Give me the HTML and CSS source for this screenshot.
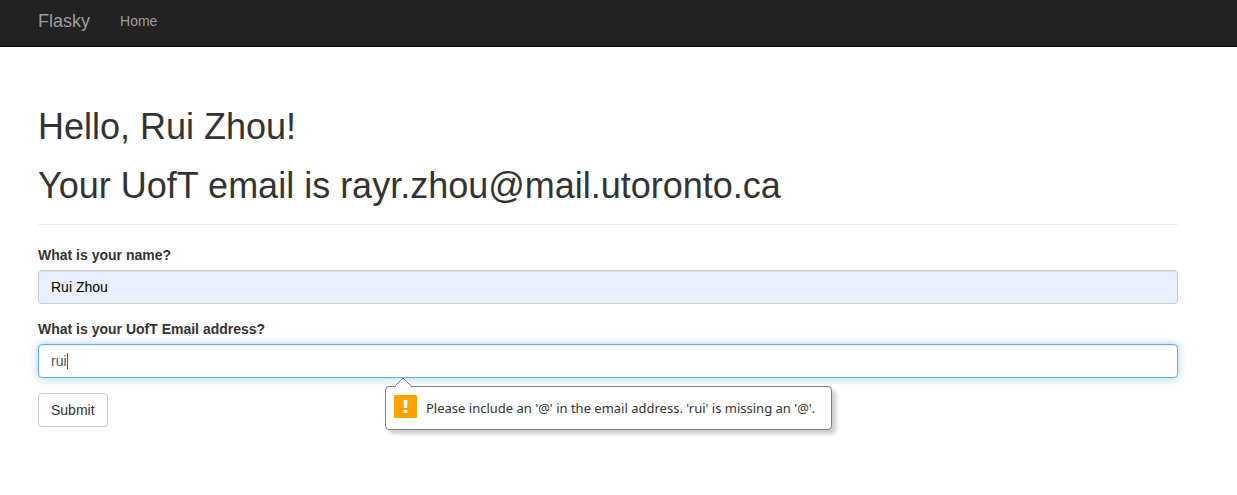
FILE: index.html
```html
<!DOCTYPE html>
<html lang="en">
<head>
<meta charset="utf-8">
<meta name="viewport" content="width=device-width, initial-scale=1">
<title>Flasky</title>
<link rel="stylesheet" href="styles.css">
</head>
<body>
<nav class="navbar">
  <div class="container navbar-inner">
    <a class="navbar-brand" href="#">Flasky</a>
    <a class="navbar-link" href="#">Home</a>
  </div>
</nav>
<main class="page">
  <div class="container">
    <header class="page-header">
      <h1>Hello, Rui Zhou!</h1>
      <h1>Your UofT email is rayr.zhou@mail.utoronto.ca</h1>
    </header>
    <form class="form" novalidate>
      <div class="form-group">
        <label for="name">What is your name?</label>
        <input class="form-control autofilled" id="name" type="text" value="Rui Zhou">
      </div>
      <div class="form-group">
        <label for="email">What is your UofT Email address?</label>
        <div class="field">
          <input class="form-control active" id="email" type="email" value="rui" aria-describedby="email-error">
          <span class="caret"></span>
          <div class="bubble" id="email-error" role="alert">
            <svg class="bubble-arrow" width="18" height="10" viewBox="0 0 18 10" aria-hidden="true">
              <path d="M1 10 9 1.500 17 10Z" fill="#fff"/>
              <path d="M0.500 9.500 9 1 17.500 9.500" fill="none" stroke="#808080"/>
            </svg>
            <svg class="bubble-icon" width="23" height="23" viewBox="0 0 23 23" aria-hidden="true">
              <rect width="23" height="23" rx="1.500" fill="#ffa200"/>
              <path d="M9.500 5h4l-.4 8h-3.200zM9.800 15h3.400v3h-3.400z" fill="#fff"/>
            </svg>
            <span>Please include an '@' in the email address. 'rui' is missing an '@'.</span>
          </div>
        </div>
      </div>
      <button class="btn" type="submit">Submit</button>
    </form>
  </div>
</main>
</body>
</html>
```
FILE: styles.css
```css
* {
  box-sizing: border-box;
}

body {
  min-height: 100vh;
  margin: 0;
  background: #fff;
  color: #333;
  font: 14px/20px "Helvetica Neue", Helvetica, Arial, "Liberation Sans", sans-serif;
}

.navbar,
.page {
  padding-right: 21px;
}

.page {
  padding-bottom: 60px;
}

.navbar {
  background: #222;
  border-bottom: 1px solid #080808;
}

.container {
  width: calc(100% - 30px);
  max-width: 1140px;
  margin: 0 auto;
}

.navbar-inner {
  display: flex;
  align-items: center;
  gap: 30px;
  padding: 11px 0 15px;
}

.navbar a {
  color: #9d9d9d;
  text-decoration: none;
}

.navbar .navbar-brand {
  font-size: 18px;
}

.page-header {
  margin: 60px 0 20px;
  padding-bottom: 19px;
  border-bottom: 1px solid #eee;
}

h1 {
  margin: 0;
  font-size: 36px;
  font-weight: 500;
  line-height: 39px;
}

h1 + h1 {
  margin-top: 20px;
}

.form-group {
  margin-bottom: 15px;
}

label {
  display: block;
  margin-bottom: 5px;
  font-weight: 700;
}

.field {
  position: relative;
}

.form-control {
  display: block;
  width: 100%;
  height: 34px;
  padding: 6px 12px;
  border: 1px solid #ccc;
  border-radius: 4px;
  outline: 0;
  background: #fff;
  color: #555;
  font: inherit;
  box-shadow: inset 0 1px 1px rgba(0, 0, 0, 0.075);
}

.autofilled {
  background: #e8f0fe;
  color: #000;
}

.active {
  border-color: #66afe9;
  box-shadow: inset 0 1px 1px rgba(0, 0, 0, 0.075), 0 0 8px rgba(102, 175, 233, 0.6);
}

.caret {
  position: absolute;
  top: 9px;
  left: 29px;
  width: 1px;
  height: 16px;
  background: #555;
}

.bubble {
  position: absolute;
  top: 42px;
  left: 347px;
  display: flex;
  align-items: center;
  gap: 9px;
  min-width: 447px;
  height: 44px;
  padding: 0 8px;
  border: 1px solid #808080;
  border-radius: 4px;
  background: #fff;
  color: #333;
  font-family: "Segoe UI", "Noto Sans", sans-serif;
  font-size: 13px;
  white-space: nowrap;
  box-shadow: 4px 4px 4px rgba(0, 0, 0, 0.2);
}

.bubble-arrow {
  position: absolute;
  top: -10px;
  left: 8px;
}

.bubble-icon {
  margin-top: -3px;
}

.btn {
  padding: 6px 12px;
  border: 1px solid #ccc;
  border-radius: 4px;
  background: #fff;
  color: #333;
  font: inherit;
  cursor: pointer;
}
```
